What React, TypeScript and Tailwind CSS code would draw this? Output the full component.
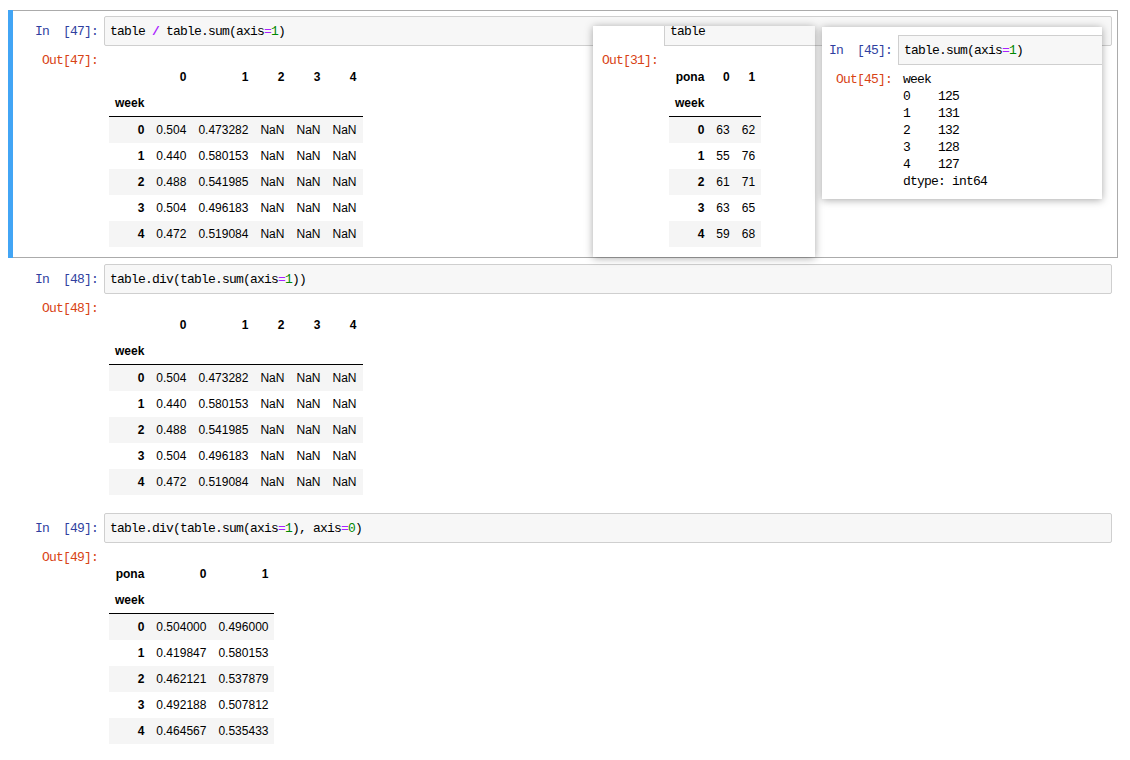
import React from "react";

const MONO = "font-['Liberation_Mono',monospace] text-[13px] tracking-[-0.8px] leading-[17px]";
const SANS = "font-['Liberation_Sans',Arial,sans-serif]";

function Op({ children, bold }: { children: React.ReactNode; bold?: boolean }) {
  return <span className={bold ? "text-[#AA22FF] font-bold" : "text-[#AA22FF]"}>{children}</span>;
}
function Num({ children }: { children: React.ReactNode }) {
  return <span className="text-[#008800]">{children}</span>;
}

function DataFrame({ corner, cols, rows }: { corner: string; cols: string[]; rows: string[][] }) {
  const th = "px-[6px] py-[6px] text-right font-bold whitespace-nowrap";
  const td = "px-[6px] py-[6px] text-right font-normal whitespace-nowrap";
  return (
    <table className={`border-collapse ${SANS} text-[12px] leading-[14px] text-black`}>
      <thead className="border-b border-black">
        <tr>
          <th className={th}>{corner}</th>
          {cols.map((c) => (
            <th key={c} className={th}>
              {c}
            </th>
          ))}
        </tr>
        <tr>
          <th className={th}>week</th>
          {cols.map((c) => (
            <th key={c} className={th}></th>
          ))}
        </tr>
      </thead>
      <tbody>
        {rows.map((r, i) => (
          <tr key={i} className={i % 2 === 0 ? "bg-[#f5f5f5]" : ""}>
            <th className={th}>{i}</th>
            {r.map((v, j) => (
              <td key={j} className={td}>
                {v}
              </td>
            ))}
          </tr>
        ))}
      </tbody>
    </table>
  );
}

function Cell({
  selected,
  n,
  code,
  children,
  className,
}: {
  selected?: boolean;
  n: number;
  code: React.ReactNode;
  children: React.ReactNode;
  className?: string;
}) {
  return (
    <div
      className={`relative border p-[5px] ${selected ? "border-[#ababab]" : "border-transparent"} ${className ?? ""}`}
    >
      {selected && <div className="absolute left-[-1px] top-[-1px] bottom-[-1px] w-[5px] bg-[#42A5F5]" />}
      <div className="flex">
        <div className={`w-[90px] shrink-0 flex items-center justify-end pr-[6px] ${MONO} text-[#303F9F] whitespace-pre`}>
          {`In  [${n}]:`}
        </div>
        <div
          className={`flex-1 h-[30px] flex items-center border border-[#cfcfcf] bg-[#f7f7f7] rounded-[2px] pl-[5px] ${MONO} text-black whitespace-pre`}
        >
          {code}
        </div>
      </div>
      <div className="flex">
        <div className={`w-[90px] shrink-0 text-right pr-[6px] pt-[6px] ${MONO} text-[#D84315]`}>{`Out[${n}]:`}</div>
        <div className="pl-[5px] pt-[18px] pb-[5px]">{children}</div>
      </div>
    </div>
  );
}

const nan3 = ["NaN", "NaN", "NaN"];
const t1: string[][] = [
  ["0.504", "0.473282", ...nan3],
  ["0.440", "0.580153", ...nan3],
  ["0.488", "0.541985", ...nan3],
  ["0.504", "0.496183", ...nan3],
  ["0.472", "0.519084", ...nan3],
];
const t3: string[][] = [
  ["0.504000", "0.496000"],
  ["0.419847", "0.580153"],
  ["0.462121", "0.537879"],
  ["0.492188", "0.507812"],
  ["0.464567", "0.535433"],
];
const tA: string[][] = [
  ["63", "62"],
  ["55", "76"],
  ["61", "71"],
  ["63", "65"],
  ["59", "68"],
];

export default function App() {
  return (
    <div className="relative w-[1130px] h-[760px] overflow-hidden bg-white">
      <div className="pt-[10px] pl-[8px] pr-[12px]">
        <Cell
          selected
          n={47}
          code={
            <>
              table <Op bold>/</Op> table.sum(axis<Op>=</Op>
              <Num>1</Num>)
            </>
          }
        >
          <DataFrame corner="" cols={["0", "1", "2", "3", "4"]} rows={t1} />
        </Cell>
        <Cell
          n={48}
          code={
            <>
              table.div(table.sum(axis<Op>=</Op>
              <Num>1</Num>))
            </>
          }
        >
          <DataFrame corner="" cols={["0", "1", "2", "3", "4"]} rows={t1} />
        </Cell>
        <Cell
          n={49}
          className="mt-[1px]"
          code={
            <>
              table.div(table.sum(axis<Op>=</Op>
              <Num>1</Num>), axis<Op>=</Op>
              <Num>0</Num>)
            </>
          }
        >
          <DataFrame corner="pona" cols={["0", "1"]} rows={t3} />
        </Cell>
      </div>

      {/* pasted window A */}
      <div className="absolute left-[593px] top-[26px] w-[222px] h-[231px] bg-white shadow-[0_1px_8px_rgba(0,0,0,0.35)]">
        <div className="flex">
          <div className="w-[71px] shrink-0" />
          <div
            className={`flex-1 h-[20px] border-l border-b border-[#cfcfcf] bg-[#f7f7f7] pl-[5px] ${MONO} !leading-[12px] text-black`}
          >
            table
          </div>
        </div>
        <div className="flex">
          <div className={`w-[71px] shrink-0 text-right pr-[6px] pt-[6px] ${MONO} text-[#D84315]`}>Out[31]:</div>
          <div className="pl-[5px] pt-[18px]">
            <DataFrame corner="pona" cols={["0", "1"]} rows={tA} />
          </div>
        </div>
      </div>

      {/* pasted window B */}
      <div className="absolute left-[822px] top-[27px] w-[280px] h-[172px] bg-white shadow-[0_1px_8px_rgba(0,0,0,0.35)] pt-[8px]">
        <div className="flex">
          <div className={`w-[76px] shrink-0 flex items-center justify-end pr-[6px] ${MONO} text-[#303F9F] whitespace-pre`}>
            {"In  [45]:"}
          </div>
          <div
            className={`flex-1 h-[30px] flex items-center border-l border-t border-b border-[#cfcfcf] bg-[#f7f7f7] pl-[5px] ${MONO} text-black whitespace-pre`}
          >
            table.sum(axis<Op>=</Op>
            <Num>1</Num>)
          </div>
        </div>
        <div className="flex">
          <div className={`w-[76px] shrink-0 text-right pr-[6px] pt-[6px] ${MONO} text-[#D84315]`}>Out[45]:</div>
          <pre className={`pl-[5px] pt-[6px] m-0 ${MONO} text-black`}>
            {"week\n0    125\n1    131\n2    132\n3    128\n4    127\ndtype: int64"}
          </pre>
        </div>
      </div>
    </div>
  );
}
